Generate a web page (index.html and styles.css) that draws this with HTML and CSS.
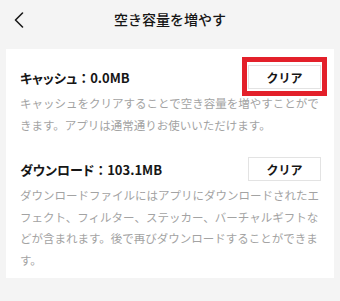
FILE: index.html
```html
<!DOCTYPE html>
<html lang="ja">
<head>
    <meta charset="UTF-8">
    <meta name="viewport" content="width=device-width, initial-scale=1.0">
    <title>空き容量を増やす</title>
    <link rel="stylesheet" href="styles.css">
</head>
<body>
    <!-- Header -->
    <header class="top-bar">
        <a class="back-btn" href="#">
            <svg width="10" height="16" viewBox="0 0 10 16">
                <polyline points="8.5,1 1.5,8 8.5,15" fill="none" stroke="#1a1a1a" stroke-width="1.6" stroke-linecap="round" stroke-linejoin="round"/>
            </svg>
        </a>
        <h1 class="page-title">空き容量を増やす</h1>
    </header>

    <div class="storage-card">
        <div class="storage-item">
            <div class="item-row">
                <span class="item-title"><span class="item-label">キャッシュ</span>：0.0MB</span>
                <span class="btn-wrap">
                    <button class="clear-btn">クリア</button>
                    <span class="highlight"></span>
                </span>
            </div>
            <p class="item-desc">キャッシュをクリアすることで空き容量を増やすことができます。アプリは通常通りお使いいただけます。</p>
        </div>

        <div class="storage-item">
            <div class="item-row">
                <span class="item-title"><span class="item-label">ダウンロード</span>：103.1MB</span>
                <span class="btn-wrap">
                    <button class="clear-btn">クリア</button>
                </span>
            </div>
            <p class="item-desc">ダウンロードファイルにはアプリにダウンロードされたエフェクト、フィルター、ステッカー、バーチャルギフトなどが含まれます。後で再びダウンロードすることができます。</p>
        </div>
    </div>
</body>
</html>
```

FILE: styles.css
```css
body {
    margin: 0;
    padding: 0;
    background: #f4f4f4;
    font-family: "Noto Sans CJK JP", "Noto Sans", sans-serif;
    color: #161616;
}

.top-bar {
    position: relative;
    height: 38px;
    display: flex;
    align-items: center;
    justify-content: center;
}

.back-btn {
    position: absolute;
    left: 14px;
    top: 12px;
    display: flex;
}

.page-title {
    margin: 0;
    font-size: 14px;
    font-weight: 500;
    line-height: 38px;
}

.storage-card {
    background: #ffffff;
    margin: 11px 6px 0;
    padding: 16px 13px 7px 14px;
}

.storage-item + .storage-item {
    margin-top: 21px;
}

.item-row {
    display: flex;
    justify-content: space-between;
    align-items: center;
    height: 24px;
}

.item-title {
    font-size: 13px;
    font-weight: 700;
}

.item-label {
    font-feature-settings: "palt";
}

.btn-wrap {
    position: relative;
    display: flex;
}

.clear-btn {
    width: 73px;
    height: 24px;
    padding: 0;
    background: #ffffff;
    border: 1px solid #e3e3e3;
    font-family: inherit;
    font-size: 12px;
    font-weight: 700;
    color: #161616;
}

.highlight {
    position: absolute;
    top: -8px;
    right: -6px;
    bottom: -7px;
    left: -6px;
    border: 5px solid #e3202a;
}

.item-desc {
    margin: 4px 0 0;
    font-size: 11.5px;
    line-height: 21.5px;
    color: #a3a3a3;
}
```
